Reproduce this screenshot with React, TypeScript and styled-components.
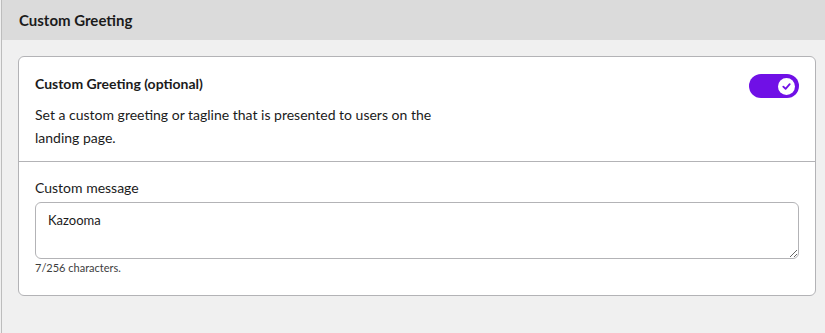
import React, { useState } from "react";
import styled, { createGlobalStyle } from "styled-components";

const GlobalStyle = createGlobalStyle`
    html, body {
        margin: 0;
        padding: 0;
        background: #f0f0f0;
    }
    body {
        font-family: Lato, "Open Sans", sans-serif;
        color: #1b1b1b;
    }
`;

const Page = styled.div`
    min-height: 333px;
    margin-left: 1px;
    border-left: 1px solid #bdbdbd;
    background: #f0f0f0;
`;

const Header = styled.div`
    height: 40px;
    display: flex;
    align-items: center;
    padding-left: 17px;
    background: #dbdbdb;
    font-size: 15px;
    font-weight: 700;
`;

const Body = styled.div`
    padding: 16px 9px 0 16px;
`;

const Card = styled.div`
    background: #fff;
    border: 1px solid #b3b3b6;
    border-radius: 6px;
`;

const Section = styled.div<{ $divided?: boolean }>`
    padding: ${(p) => (p.$divided ? "16px 16px 20px 16px" : "18px 16px 12px 16px")};
    border-top: ${(p) => (p.$divided ? "1px solid #b3b3b6" : "none")};
`;

const TitleRow = styled.div`
    display: flex;
    justify-content: space-between;
    align-items: flex-start;
`;

const Title = styled.div`
    font-size: 14px;
    font-weight: 700;
    line-height: 18px;
`;

const Desc = styled.p`
    margin: 5px 0 0;
    max-width: 435px;
    font-size: 14px;
    line-height: 23px;
`;

const Toggle = styled.button<{ $on: boolean }>`
    width: 50px;
    height: 24px;
    border: none;
    border-radius: 12px;
    padding: 0 4px;
    display: flex;
    align-items: center;
    justify-content: ${(p) => (p.$on ? "flex-end" : "flex-start")};
    background: ${(p) => (p.$on ? "#7010e6" : "#9a9a9a")};
    cursor: pointer;
    margin-top: -1px;
`;

const Knob = styled.span`
    width: 17px;
    height: 17px;
    border-radius: 50%;
    background: #fff;
    display: flex;
    align-items: center;
    justify-content: center;
`;

const Label = styled.label`
    display: block;
    font-size: 14px;
    line-height: 20px;
    margin-bottom: 4px;
`;

const TextArea = styled.textarea`
    display: block;
    box-sizing: border-box;
    width: 100%;
    height: 57px;
    padding: 8px 12px;
    border: 1px solid #b3b3b6;
    border-radius: 6px;
    font-family: Lato, "Open Sans", sans-serif;
    font-size: 13px;
    line-height: 18px;
    color: #1b1b1b;
    outline: none;
`;

const Hint = styled.div`
    margin-top: 2px;
    font-size: 11px;
    line-height: 14px;
    color: #3d3d3d;
`;

export default function App() {
    const [on, setOn] = useState(true);
    const [text, setText] = useState("Kazooma");

    return (
        <>
            <GlobalStyle />
            <Page>
                <Header>Custom Greeting</Header>
                <Body>
                    <Card>
                        <Section>
                            <TitleRow>
                                <Title>Custom Greeting (optional)</Title>
                                <Toggle $on={on} onClick={() => setOn(!on)} aria-label="toggle">
                                    <Knob>
                                        <svg width="11" height="11" viewBox="0 0 12 12">
                                            <path
                                                d="M2.5 6.2 L5 8.5 L9.5 3.5"
                                                fill="none"
                                                stroke="#7010e6"
                                                strokeWidth="2"
                                                strokeLinecap="round"
                                                strokeLinejoin="round"
                                            />
                                        </svg>
                                    </Knob>
                                </Toggle>
                            </TitleRow>
                            <Desc>
                                Set a custom greeting or tagline that is presented to users on the
                                landing page.
                            </Desc>
                        </Section>
                        <Section $divided>
                            <Label>Custom message</Label>
                            <TextArea value={text} onChange={(e) => setText(e.target.value)} />
                            <Hint>{text.length}/256 characters.</Hint>
                        </Section>
                    </Card>
                </Body>
            </Page>
        </>
    );
}
